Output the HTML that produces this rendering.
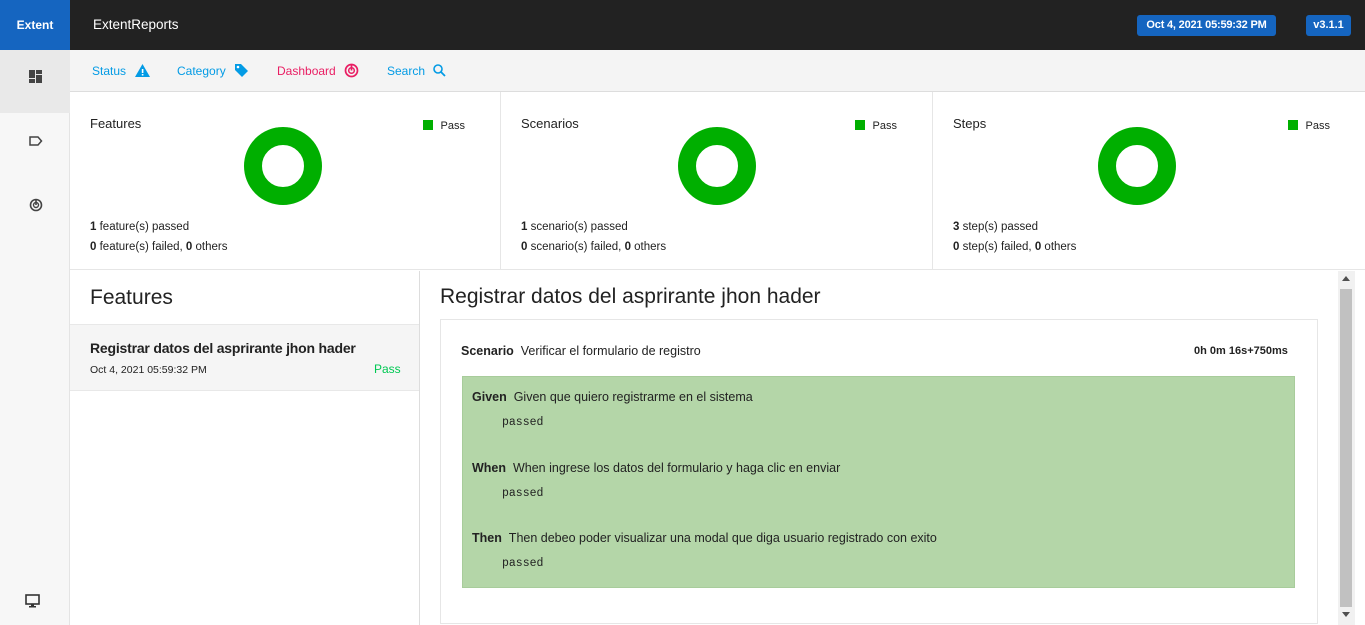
<!DOCTYPE html>
<html><head><meta charset="utf-8"><style>
*{box-sizing:border-box;margin:0;padding:0}
body{width:1365px;height:625px;overflow:hidden;font-family:"Liberation Sans",sans-serif;color:#222;background:#fff;position:relative;font-size:12px}
.abs{position:absolute}
.top{left:0;top:0;width:1365px;height:50px;background:#222}
.logo{left:0;top:0;width:70px;height:50px;background:#1565c0;color:#fff;font-size:12px;font-weight:bold;text-align:center;line-height:50px}
.brand{left:93px;top:17px;color:#fff;font-size:13.5px}
.badge{background:#1565c0;color:#fff;font-size:11px;font-weight:bold;border-radius:3px;height:21px;line-height:21px;padding:0 6px;top:15px;white-space:nowrap;text-align:center}
.side{left:0;top:50px;width:70px;height:575px;background:#f7f7f7;border-right:1px solid #e4e4e4}
.nav{left:70px;top:50px;width:1295px;height:42px;background:#f4f4f4;border-bottom:1px solid #ddd}
.nav span{position:absolute;top:14px;font-size:12px}
.card{top:92px;height:178px;border-right:1px solid #e6e6e6;border-bottom:1px solid #e6e6e6}
.card .t{position:absolute;left:20px;top:24px;font-size:13px}
.card .lg{position:absolute;right:35px;top:28px;font-size:11px}
.card .lg i{display:inline-block;width:10px;height:10px;background:#00af00;margin-right:8px;vertical-align:-1px}
.card .d{position:absolute;top:35px;width:78px;height:78px;border-radius:50%;border:18px solid #00af00}
.card .s{position:absolute;left:20px;font-size:11.5px}
</style></head><body>
<div class="abs top"></div>
<div class="abs logo">Extent</div>
<div class="abs brand">ExtentReports</div>
<div class="abs badge" style="left:1137px;width:139px;letter-spacing:-0.2px">Oct 4, 2021 05:59:32 PM</div>
<div class="abs badge" style="left:1306px;width:45px">v3.1.1</div>

<div class="abs side"></div>
<div class="abs" style="left:0;top:50px;width:70px;height:63px;background:#e9e9e9"></div>
<svg class="abs" style="left:29px;top:70px" width="13" height="13"><rect x="0" y="0" width="6" height="8" fill="#444"/><rect x="7" y="0" width="6" height="4" fill="#444"/><rect x="0" y="9" width="6" height="4" fill="#444"/><rect x="7" y="5" width="6" height="8" fill="#444"/></svg>
<svg class="abs" style="left:29px;top:135px" width="14" height="12"><path d="M1 2h8l3.5 4L9 10H1z" fill="none" stroke="#444" stroke-width="1.5"/></svg>
<svg class="abs" style="left:29px;top:198px" width="14" height="14"><circle cx="7" cy="7" r="5.5" fill="none" stroke="#444" stroke-width="1.6"/><circle cx="7" cy="7" r="2.5" fill="none" stroke="#444" stroke-width="1.4"/><path d="M7 1v6" stroke="#444" stroke-width="1.6"/></svg>
<svg class="abs" style="left:25px;top:594px" width="16" height="14"><rect x="1" y="1" width="13" height="9" fill="none" stroke="#333" stroke-width="1.6"/><rect x="6" y="10" width="3" height="2" fill="#333"/><rect x="4" y="12" width="7" height="1.5" fill="#333"/></svg>

<div class="abs nav">
<span style="left:22px;color:#039be5">Status</span>
<span style="left:107px;color:#039be5">Category</span>
<span style="left:207px;color:#e91e63">Dashboard</span>
<span style="left:317px;color:#039be5">Search</span>
</div>
<svg class="abs" style="left:135px;top:64px" width="15" height="13"><path d="M7.5 0L15 13H0z" fill="#039be5"/><rect x="6.8" y="5" width="1.6" height="4" fill="#fff"/><rect x="6.8" y="10" width="1.6" height="1.5" fill="#fff"/></svg>
<svg class="abs" style="left:234px;top:63px" width="15" height="15"><path d="M1 1h6l7 7-6 6-7-7z" fill="#039be5"/><circle cx="4" cy="4" r="1.3" fill="#fff"/></svg>
<svg class="abs" style="left:344px;top:63px" width="15" height="15"><circle cx="7.5" cy="7.5" r="6" fill="none" stroke="#e91e63" stroke-width="1.7"/><circle cx="7.5" cy="7.5" r="2.8" fill="none" stroke="#e91e63" stroke-width="1.5"/><path d="M7.5 1v6.5" stroke="#e91e63" stroke-width="1.7"/></svg>
<svg class="abs" style="left:433px;top:64px" width="13" height="13"><circle cx="5" cy="5" r="4" fill="none" stroke="#039be5" stroke-width="1.6"/><path d="M8 8l4 4" stroke="#039be5" stroke-width="1.8"/></svg>

<div class="abs card" style="left:70px;width:431px"><div class="t">Features</div><div class="lg"><i></i>Pass</div><div class="d" style="left:174px"></div><div class="s" style="top:129px"><b>1</b> feature(s) passed</div><div class="s" style="top:149px"><b>0</b> feature(s) failed, <b>0</b> others</div></div>
<div class="abs card" style="left:501px;width:432px"><div class="t">Scenarios</div><div class="lg"><i></i>Pass</div><div class="d" style="left:177px"></div><div class="s" style="top:129px"><b>1</b> scenario(s) passed</div><div class="s" style="top:149px"><b>0</b> scenario(s) failed, <b>0</b> others</div></div>
<div class="abs card" style="left:933px;width:432px;border-right:none"><div class="t">Steps</div><div class="lg"><i></i>Pass</div><div class="d" style="left:165px"></div><div class="s" style="top:129px"><b>3</b> step(s) passed</div><div class="s" style="top:149px"><b>0</b> step(s) failed, <b>0</b> others</div></div>

<div class="abs" style="left:70px;top:271px;width:350px;height:354px;border-right:1px solid #ddd"></div>
<div class="abs" style="left:90px;top:286px;font-size:21px">Features</div>
<div class="abs" style="left:70px;top:324px;width:349px;height:67px;background:#f5f5f5;border-top:1px solid #e8e8e8;border-bottom:1px solid #e8e8e8"></div>
<div class="abs" style="left:90px;top:340px;font-size:14px;font-weight:bold;letter-spacing:-0.2px">Registrar datos del asprirante jhon hader</div>
<div class="abs" style="left:90px;top:364px;font-size:10.5px">Oct 4, 2021 05:59:32 PM</div>
<div class="abs" style="left:374px;top:362px;font-size:12px;color:#00c853">Pass</div>

<div class="abs" style="left:440px;top:285px;font-size:21px">Registrar datos del asprirante jhon hader</div>
<div class="abs" style="left:440px;top:319px;width:878px;height:305px;border:1px solid #e6e6e6"></div>
<div class="abs" style="left:461px;top:344px;font-size:12.5px"><b>Scenario</b>&nbsp;&nbsp;Verificar el formulario de registro</div>
<div class="abs" style="left:1194px;top:345px;font-size:11px;font-weight:bold">0h 0m 16s+750ms</div>
<div class="abs" style="left:462px;top:376px;width:833px;height:212px;background:#b4d6a8;border:1px solid #a8cc9b"></div>
<div class="abs" style="left:472px;top:390px;font-size:12.5px"><b>Given</b>&nbsp;&nbsp;Given que quiero registrarme en el sistema</div>
<div class="abs" style="left:502px;top:416px;font-size:11.5px;font-family:'Liberation Mono',monospace">passed</div>
<div class="abs" style="left:472px;top:461px;font-size:12.5px"><b>When</b>&nbsp;&nbsp;When ingrese los datos del formulario y haga clic en enviar</div>
<div class="abs" style="left:502px;top:487px;font-size:11.5px;font-family:'Liberation Mono',monospace">passed</div>
<div class="abs" style="left:472px;top:531px;font-size:12.5px"><b>Then</b>&nbsp;&nbsp;Then debeo poder visualizar una modal que diga usuario registrado con exito</div>
<div class="abs" style="left:502px;top:557px;font-size:11.5px;font-family:'Liberation Mono',monospace">passed</div>

<div class="abs" style="left:1338px;top:271px;width:17px;height:354px;background:#f1f1f1"></div>
<div class="abs" style="left:1340px;top:289px;width:12px;height:318px;background:#c1c1c1"></div>
<div class="abs" style="left:1342px;top:276px;width:0;height:0;border-left:4px solid transparent;border-right:4px solid transparent;border-bottom:5px solid #505050"></div>
<div class="abs" style="left:1342px;top:612px;width:0;height:0;border-left:4px solid transparent;border-right:4px solid transparent;border-top:5px solid #505050"></div>
</body></html>
